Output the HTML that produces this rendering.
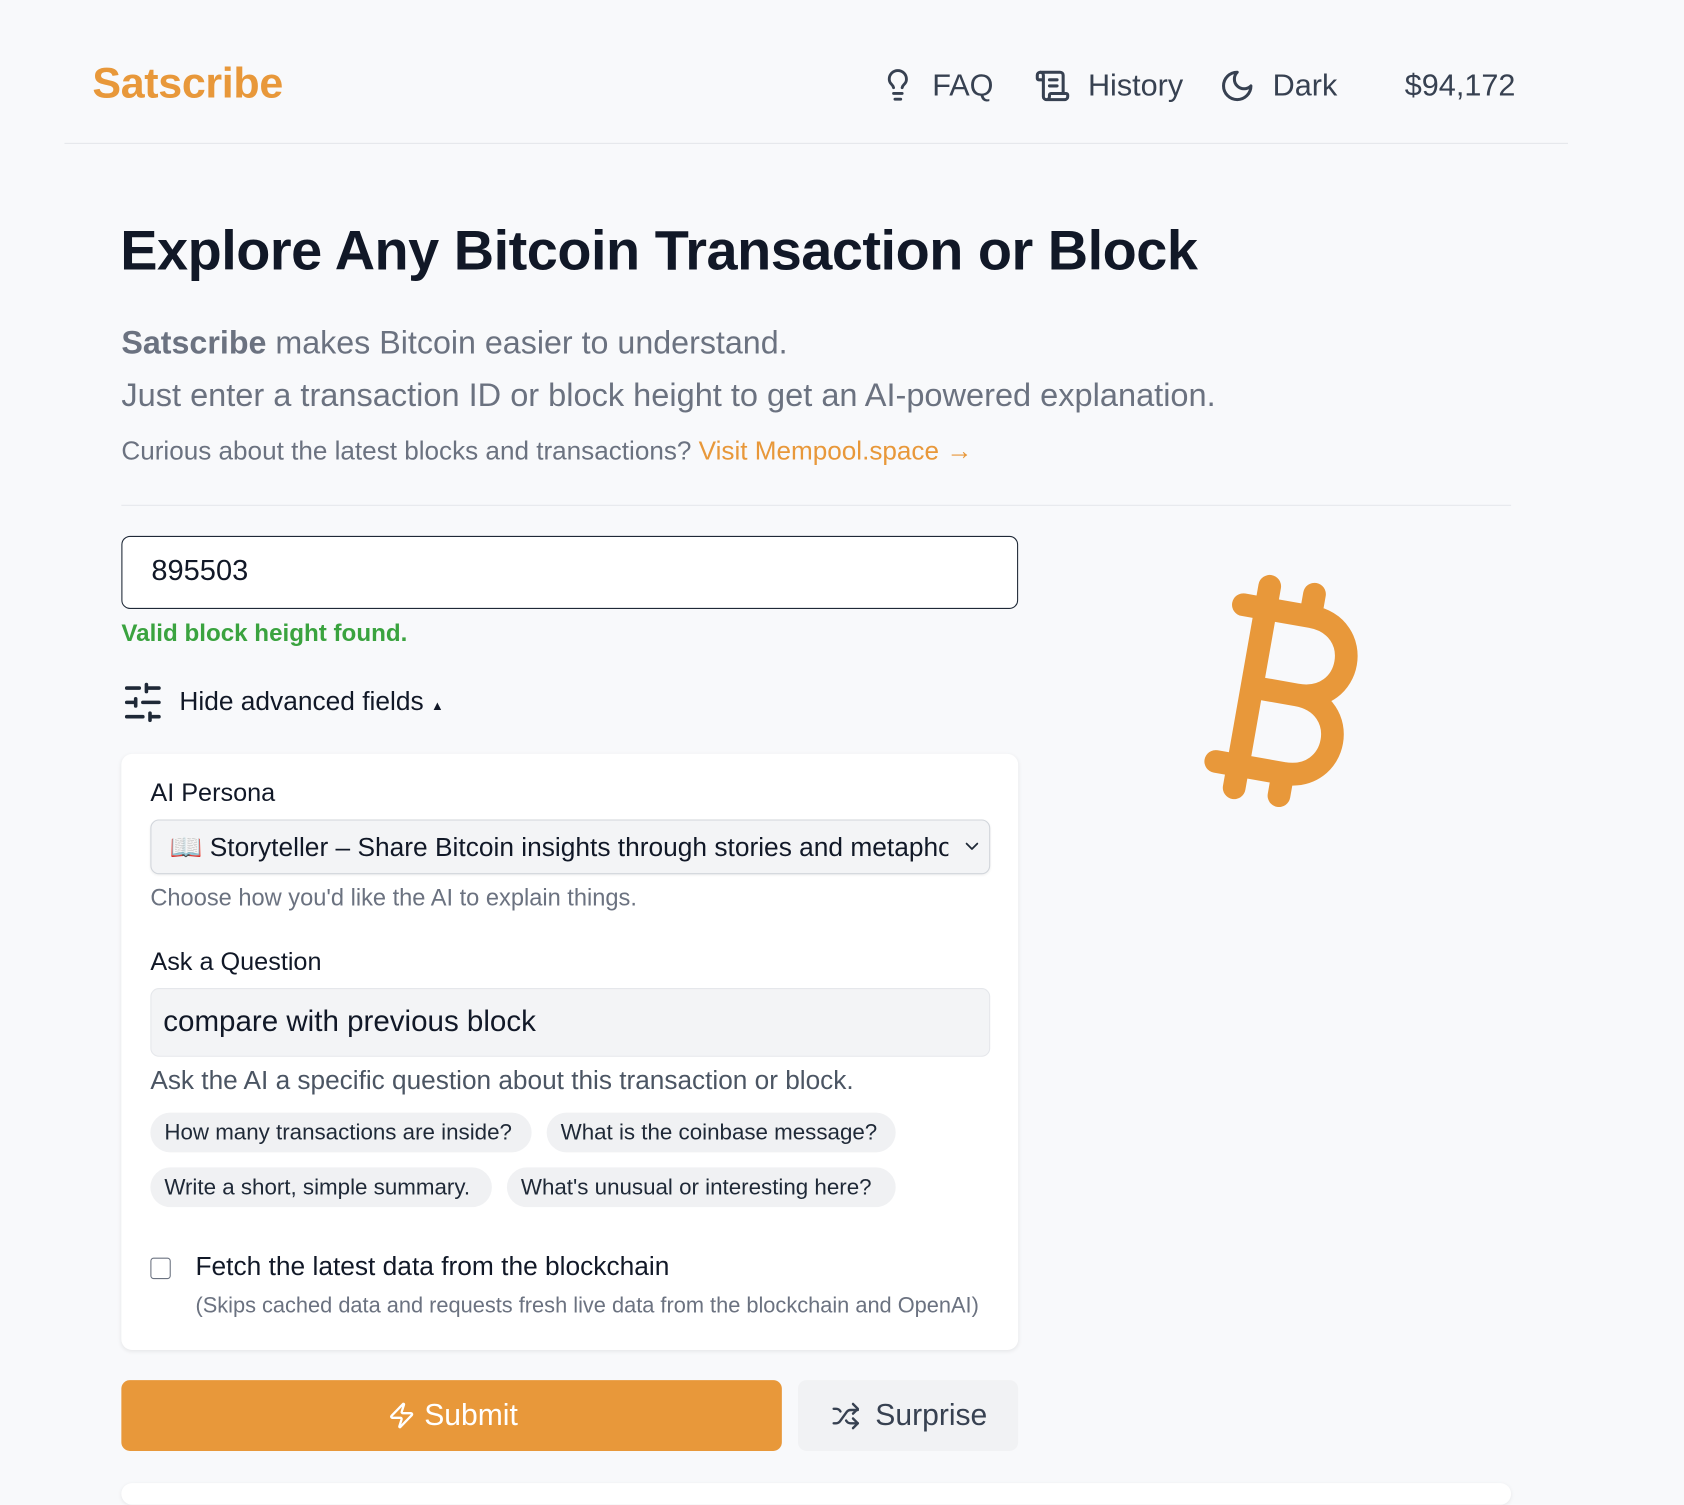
<!DOCTYPE html>
<html><head><meta charset="utf-8"><style>
html,body{margin:0;padding:0;background:#f8f9fb;overflow:hidden;width:1684px;height:1488px}
#w{position:absolute;left:0;top:0;width:1568px;height:1386px;transform:scale(1.07398);transform-origin:0 0;font-family:"Liberation Sans",sans-serif;color:#1f2937}
.a{position:absolute;white-space:nowrap}
svg.i{fill:none;stroke:currentColor;stroke-width:2;stroke-linecap:round;stroke-linejoin:round}
.chip{position:absolute;height:37px;line-height:37px;background:#f0f1f3;border-radius:19px;font-size:20.8px;padding:0 13px;color:#1f2937;white-space:nowrap}
</style></head><body><div id="w">
<div class="a" style="left:86px;top:56px;font-size:40px;font-weight:bold;color:#E8983A;letter-spacing:-0.3px">Satscribe</div>
<div class="a" style="left:816px;top:60px;font-size:28.5px;color:#374151;line-height:40px">
<svg class="i" style="position:absolute;left:4px;top:3px" width="32" height="32" viewBox="0 0 24 24"><path d="M15 14c.2-1 .7-1.7 1.5-2.5 1-.9 1.5-2.2 1.5-3.5A6 6 0 0 0 6 8c0 1 .2 2.2 1.5 3.5.7.7 1.3 1.5 1.5 2.5"/><path d="M9 18h6"/><path d="M10 22h4"/></svg>
<span style="position:absolute;left:52px">FAQ</span>
<svg class="i" style="position:absolute;left:147px;top:3px" width="34" height="34" viewBox="0 0 24 24"><path d="M15 12h-5"/><path d="M15 8h-5"/><path d="M19 17V5a2 2 0 0 0-2-2H4"/><path d="M8 21h12a2 2 0 0 0 2-2v-1a1 1 0 0 0-1-1H11a1 1 0 0 0-1 1v1a2 2 0 1 1-4 0V5a2 2 0 1 0-4 0v2a1 1 0 0 0 1 1h3"/></svg>
<span style="position:absolute;left:197px">History</span>
<svg class="i" style="position:absolute;left:319px;top:3px" width="34" height="34" viewBox="0 0 24 24"><path d="M12 3a6 6 0 0 0 9 9 9 9 0 1 1-9-9Z"/></svg>
<span style="position:absolute;left:369px">Dark</span>
<span style="position:absolute;left:492px">$94,172</span>
</div>
<div class="a" style="left:60px;top:133px;width:1400px;height:1px;background:#e5e7eb"></div>
<div class="a" style="left:112px;top:204px;font-size:52px;font-weight:bold;color:#111827;letter-spacing:-0.45px">Explore Any Bitcoin Transaction or Block</div>
<div class="a" style="left:113px;top:303px;font-size:30px;color:#6b7280"><b style="color:#6b7280">Satscribe</b> makes Bitcoin easier to understand.</div>
<div class="a" style="left:113px;top:352px;font-size:30.3px;color:#6b7280">Just enter a transaction ID or block height to get an AI-powered explanation.</div>
<div class="a" style="left:113px;top:407px;font-size:24.3px;color:#6b7280">Curious about the latest blocks and transactions? <span style="color:#E8983A">Visit Mempool.space →</span></div>
<div class="a" style="left:113px;top:470px;width:1294px;height:1px;background:#e5e7eb"></div>
<div class="a" style="left:113px;top:499px;width:833px;height:66px;border:1.5px solid #1f2937;border-radius:8px;background:#fff"></div>
<div class="a" style="left:141px;top:516px;font-size:27px;color:#111827">895503</div>
<div class="a" style="left:113px;top:577px;font-size:22.5px;color:#3aa33f;font-weight:bold">Valid block height found.</div>
<svg class="i" style="position:absolute;left:113px;top:634px" width="40" height="40" viewBox="0 0 24 24"><path d="M21 4h-7M10 4H3M21 12h-9M8 12H3M21 20h-5M12 20H3M14 2v4M8 10v4M16 18v4"/></svg>
<div class="a" style="left:167px;top:640px;font-size:24.5px;color:#111827">Hide advanced fields <span style="font-size:12px">▲</span></div>
<div class="a" style="left:113px;top:702px;width:835px;height:555px;background:#fff;border-radius:10px;box-shadow:0 1px 4px rgba(0,0,0,.08)"></div>
<div class="a" style="left:140px;top:725px;font-size:23.5px;color:#111827">AI Persona</div>
<div class="a" style="left:140px;top:763px;width:780px;height:49px;background:#f3f4f6;border:1px solid #d1d5db;border-radius:8px;box-shadow:0 1px 2px rgba(0,0,0,.06);overflow:hidden">
<span class="a" style="left:17px;top:10px;font-size:24.5px;color:#111827;width:725px;overflow:hidden">📖 Storyteller – Share Bitcoin insights through stories and metaphors</span>
<svg class="i" style="position:absolute;left:754px;top:14px" width="20" height="20" viewBox="0 0 24 24"><path d="m6 9 6 6 6-6"/></svg></div>
<div class="a" style="left:140px;top:823px;font-size:22px;color:#6b7280">Choose how you'd like the AI to explain things.</div>
<div class="a" style="left:140px;top:882px;font-size:23.5px;color:#111827">Ask a Question</div>
<div class="a" style="left:140px;top:920px;width:780px;height:62px;background:#f3f4f6;border:1px solid #e5e7eb;border-radius:8px"></div>
<div class="a" style="left:152px;top:935px;font-size:27.5px;color:#111827">compare with previous block</div>
<div class="a" style="left:140px;top:993px;font-size:24.4px;color:#4b5563">Ask the AI a specific question about this transaction or block.</div>
<div class="chip" style="left:140px;top:1036px;width:329px">How many transactions are inside?</div>
<div class="chip" style="left:509px;top:1036px;width:299px">What is the coinbase message?</div>
<div class="chip" style="left:140px;top:1087px;width:292px">Write a short, simple summary.</div>
<div class="chip" style="left:472px;top:1087px;width:336px">What's unusual or interesting here?</div>
<div class="a" style="left:140px;top:1171px;width:17px;height:18px;border:1.5px solid #6b7280;border-radius:3px;background:#fff"></div>
<div class="a" style="left:182px;top:1166px;font-size:24.5px;color:#111827">Fetch the latest data from the blockchain</div>
<div class="a" style="left:182px;top:1205px;font-size:20.3px;color:#6b7280">(Skips cached data and requests fresh live data from the blockchain and OpenAI)</div>
<div class="a" style="left:113px;top:1285px;width:615px;height:66px;background:#E8983A;border-radius:8px"></div>
<svg class="i" style="position:absolute;left:361px;top:1305px;color:#fff" width="26" height="26" viewBox="0 0 24 24"><path d="M4 14a1 1 0 0 1-.78-1.63l9.9-10.2a.5.5 0 0 1 .86.46l-1.92 6.02A1 1 0 0 0 13 10h7a1 1 0 0 1 .78 1.63l-9.9 10.2a.5.5 0 0 1-.86-.46l1.92-6.02A1 1 0 0 0 11 14z"/></svg>
<div class="a" style="left:395px;top:1302px;font-size:28px;color:#fff">Submit</div>
<div class="a" style="left:743px;top:1285px;width:205px;height:66px;background:#f1f2f4;border-radius:8px"></div>
<svg class="i" style="position:absolute;left:774px;top:1305px;color:#374151" width="27" height="27" viewBox="0 0 24 24"><path d="m18 14 4 4-4 4"/><path d="m18 2 4 4-4 4"/><path d="M2 18h1.973a4 4 0 0 0 3.3-1.7l5.454-7.6a4 4 0 0 1 3.3-1.7H22"/><path d="M2 6h1.972a4 4 0 0 1 3.6 2.2"/><path d="M22 18h-6.041a4 4 0 0 1-3.3-1.8l-.359-.45"/></svg>
<div class="a" style="left:815px;top:1302px;font-size:28px;color:#374151">Surprise</div>
<div class="a" style="left:113px;top:1381px;width:1294px;height:20px;background:#fff;border-radius:10px;box-shadow:0 1px 4px rgba(0,0,0,.08)"></div>
<svg class="i" style="position:absolute;left:1070px;top:518px;color:#E8983A" width="254" height="254" viewBox="0 0 24 24"><path d="M11.767 19.089c4.924.868 6.14-6.025 1.216-6.894m-1.216 6.894L5.86 18.047m5.908 1.042-.347 1.97m1.563-8.864c4.924.869 6.14-6.025 1.215-6.893m-1.215 6.893-3.94-.694m5.155-6.2L8.29 4.26m5.908 1.042.348-1.97M7.48 20.364l3.126-17.727"/></svg>
</div></body></html>
